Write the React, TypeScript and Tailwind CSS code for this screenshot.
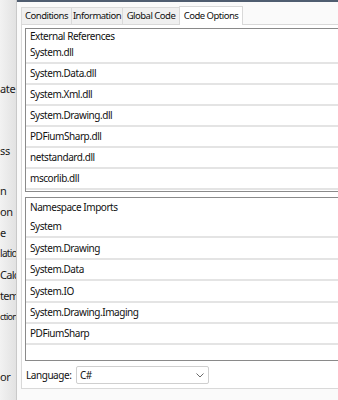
import type { ReactNode } from 'react'

const references = [
  'System.dll',
  'System.Data.dll',
  'System.Xml.dll',
  'System.Drawing.dll',
  'PDFiumSharp.dll',
  'netstandard.dll',
  'mscorlib.dll',
]

// heights tuned to the row pitch of the list (about 21.4px)
const imports: { name: string; h: string }[] = [
  { name: 'System', h: 'h-[21px]' },
  { name: 'System.Drawing', h: 'h-[22px]' },
  { name: 'System.Data', h: 'h-[21px]' },
  { name: 'System.IO', h: 'h-[22px]' },
  { name: 'System.Drawing.Imaging', h: 'h-[21px]' },
  { name: 'PDFiumSharp', h: 'h-[21px]' },
]

const tabs = [
  { label: 'Conditions', w: 'w-[50px]' },
  { label: 'Information', w: 'w-[51px]' },
  { label: 'Global Code', w: 'w-[57px]' },
]

function Row({ children, className }: { children: ReactNode; className: string }) {
  return (
    <div className={`${className} flex items-center pl-[4px] border-b-2 border-[#e4e4e4] box-border whitespace-nowrap`}>
      {children}
    </div>
  )
}

function SideLabels() {
  // clipped labels of the form behind the tab control
  return (
    <div className="w-[17px] shrink-0 overflow-hidden bg-gradient-to-r from-[#f2f2f2] to-[#e2e2e2] border-r border-[#c9c9c9] text-[#1a1a1a] text-[11px] tracking-[-0.3px]">
      <div className="flex flex-col">
        <div className="mt-[78px] h-[21px] leading-[21px] whitespace-nowrap">ate</div>
        <div className="mt-[41px] h-[21px] leading-[21px] whitespace-nowrap">ss</div>
        <div className="mt-[19px] h-[21px] leading-[21px] whitespace-nowrap">n</div>
        <div className="h-[21px] leading-[21px] whitespace-nowrap">on</div>
        <div className="h-[21px] leading-[21px] whitespace-nowrap">e</div>
        <div className="h-[21px] leading-[21px] whitespace-nowrap text-[10px] tracking-[-0.7px]">latio</div>
        <div className="h-[21px] leading-[21px] whitespace-nowrap tracking-[-0.7px]">Calc</div>
        <div className="h-[21px] leading-[21px] whitespace-nowrap tracking-[-0.7px]">tem</div>
        <div className="h-[21px] leading-[21px] whitespace-nowrap text-[9px] tracking-[-0.8px]">ction</div>
        <div className="mt-[39px] h-[21px] leading-[21px] whitespace-nowrap">or</div>
      </div>
    </div>
  )
}

export default function App() {
  return (
    <div className="w-[338px] h-[400px] flex overflow-hidden bg-white text-[10px] tracking-[-0.45px] text-[#111] font-['Noto_Sans',sans-serif]">
      <SideLabels />
      <div className="flex-1 flex flex-col bg-[#fafafa]">
        <div className="h-[2px] bg-[#4f5d70]" />
        <div className="pl-[4px] pt-[4px]">
          {/* tab strip */}
          <div className="flex items-end h-[18px] text-[9.5px] tracking-[-0.5px]">
            {tabs.map((t) => (
              <div
                key={t.label}
                className={`${t.w} h-[17px] bg-[#f0f0f0] border border-b-0 border-r-0 border-[#dadada] flex items-center justify-center whitespace-nowrap`}
              >
                {t.label}
              </div>
            ))}
            <div className="w-[64px] h-[19px] -mb-px z-10 bg-white border border-b-0 border-[#d9d9d9] flex items-center justify-center whitespace-nowrap">
              Code Options
            </div>
          </div>
          {/* tab page */}
          <div className="w-[420px] h-[365px] bg-white border border-[#d9d9d9] pl-[3px] pt-[3px]">
            <div className="h-[164px] overflow-hidden border border-[#8a8a8a] bg-white">
              <div className="h-[14px] flex items-center pl-[4px]">External References</div>
              {references.map((r, i) => (
                <Row key={r} className={i === references.length - 1 ? 'h-[21px] border-b-0' : 'h-[21px]'}>
                  {r}
                </Row>
              ))}
            </div>
            <div className="mt-[5px] h-[164px] overflow-hidden border border-[#8a8a8a] bg-white">
              <div className="h-[19px] flex items-center pl-[4px]">Namespace Imports</div>
              {imports.map((r) => (
                <Row key={r.name} className={r.h}>
                  {r.name}
                </Row>
              ))}
              <div className="h-[21px]" />
            </div>
            <div className="mt-[5px] flex items-center h-[18px]">
              <div className="w-[51px] shrink-0 pl-[1px] whitespace-nowrap">Language:</div>
              <div className="w-[133px] h-[18px] border border-[#cfcfcf] rounded-[2px] bg-white flex items-center justify-between pl-[3px] pr-[4px]">
                <span>C#</span>
                <svg width="8" height="5" viewBox="0 0 8 5" fill="none">
                  <path d="M0.5 0.5 L4 4 L7.5 0.5" stroke="#6b6b6b" strokeWidth="1" />
                </svg>
              </div>
            </div>
          </div>
        </div>
      </div>
    </div>
  )
}
